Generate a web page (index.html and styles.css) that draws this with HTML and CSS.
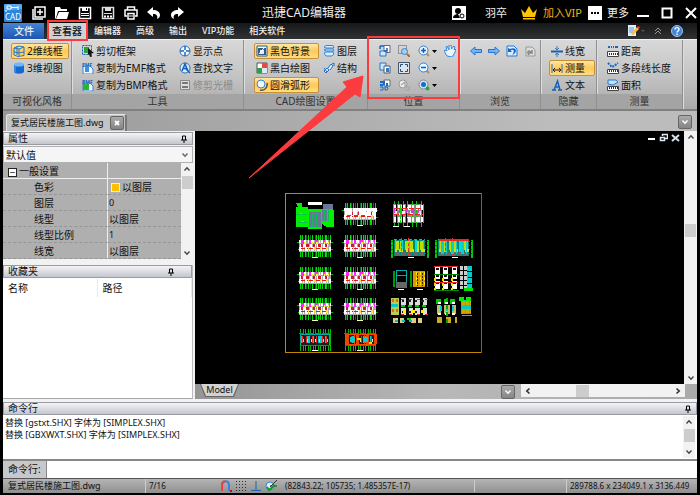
FILE: index.html
```html
<!DOCTYPE html>
<html lang="zh-CN">
<head>
<meta charset="utf-8">
<title>迅捷CAD编辑器</title>
<link rel="stylesheet" href="styles.css">
</head>
<body>
<svg class="defs" aria-hidden="true">
  <defs>
    <symbol id="i-down" viewBox="0 0 8 8"><path d="M1.500 2.500 4 5.200 6.500 2.500" fill="none" stroke="currentColor" stroke-width="1.400"/></symbol>
    <symbol id="i-up" viewBox="0 0 8 8"><path d="M1.500 5.500 4 2.800 6.500 5.500" fill="none" stroke="currentColor" stroke-width="1.400"/></symbol>
    <symbol id="i-left" viewBox="0 0 8 8"><path d="M5.500 1.500 2.800 4 5.500 6.500" fill="none" stroke="currentColor" stroke-width="1.600"/></symbol>
    <symbol id="i-right" viewBox="0 0 8 8"><path d="M2.500 1.500 5.200 4 2.500 6.500" fill="none" stroke="currentColor" stroke-width="1.600"/></symbol>
    <symbol id="i-pin" viewBox="0 0 8 8"><path d="M2.500 5V1h3v4M1 5h6M4 5v3" fill="none" stroke="#000"/><path d="M5 1h1v4H5z"/></symbol>

    <symbol id="plan" viewBox="0 0 36 24">
      <g fill="none">
        <path d="M3 12H34" stroke="#0d0" stroke-width="22" stroke-dasharray="1 1 1 2 2 1 1 1"/>
        <path d="M4 12H33" stroke="#052" stroke-width="22" stroke-dasharray="1 4 1 3" opacity=".8"/>
        <path d="M0 8.500H36M1 15.500H36" stroke="#0b0" stroke-dasharray="4 1 2 1"/>
        <path d="M2 11.500H34" stroke="#aaa" stroke-width="12"/>
        <path d="M2 7H34" stroke="#fff" stroke-width="3" stroke-dasharray="4 1 2 2 1 1"/>
        <path d="M4 8H33" stroke="#f2f" stroke-width="4" stroke-dasharray="3 5 2 4"/>
        <path d="M3 11H33" stroke="#fff" stroke-width="3" stroke-dasharray="2 1 3 1 1 2"/>
        <path d="M4 11H32" stroke="#d01830" stroke-width="3" stroke-dasharray="2 3 3 4"/>
        <path d="M7 9H32" stroke="#ff0" stroke-width="2" stroke-dasharray="2 6 1 3"/>
        <path d="M2 15H34" stroke="#fff" stroke-width="4" stroke-dasharray="3 1 1 1"/>
        <path d="M4 14.500H33" stroke="#e0181c" stroke-dasharray="4 2 6 3"/>
        <path d="M11 14H32" stroke="#fd4" stroke-width="3" stroke-dasharray="1 5 2 4"/>
        <path d="M15 23.500H21" stroke="#ffa"/>
      </g>
    </symbol>
    <symbol id="roof" viewBox="0 0 36 24">
      <g fill="none">
        <path d="M3 12H34" stroke="#0b0" stroke-width="22" stroke-dasharray="1 2 1 1"/>
        <path d="M3 12H33" stroke="#122" stroke-width="12"/>
        <path d="M3.500 6.500H32.500V17.500H3.500z" stroke="#0aa"/>
        <path d="M2 5.500H34M3 17.500H33" stroke="#e22" stroke-dasharray="5 2 8 1"/>
        <path d="M4 11H33" stroke="#0cc" stroke-width="7" stroke-dasharray="1 4 4 3"/>
        <path d="M5 11H32" stroke="#e22" stroke-width="7" stroke-dasharray="1 3 1 5"/>
        <path d="M6 12H31" stroke="#ddd" stroke-width="3" stroke-dasharray="1 3"/>
        <path d="M15 22.500H21" stroke="#fff"/>
      </g>
    </symbol>
    <symbol id="elev" viewBox="0 0 38 22">
      <g fill="none">
        <path d="M0 11.500H38" stroke="#0c0" stroke-width="18" stroke-dasharray="2 34"/>
        <path d="M0 4.500H37M0 8.500H37M0 12.500H37M0 16.500H37" stroke="#070" stroke-dasharray="2 1"/>
        <path d="M3 11H34" stroke="#087" stroke-width="16"/>
        <path d="M4 8H34" stroke="#bd0" stroke-width="9" stroke-dasharray="4 1 3 2"/>
        <path d="M4 9H34" stroke="#0dd" stroke-width="12" stroke-dasharray="1 5 2 6"/>
        <path d="M4 13H34" stroke="#dd0" stroke-width="3" stroke-dasharray="2 2 4 3"/>
        <path d="M4 17H34" stroke="#666" stroke-width="4" stroke-dasharray="5 1"/>
        <path d="M3 2.500H34" stroke="#0d0" stroke-dasharray="3 2"/>
        <path d="M17 1V20M10 1V19" stroke="#e33" stroke-dasharray="3 2"/>
        <path d="M17 20.500H23" stroke="#fff"/>
      </g>
    </symbol>
  </defs>
</svg>

<div class="app">
  <header class="titlebar">
    <svg class="logo" viewBox="0 0 18 18" aria-hidden="true"><rect width="18" height="18" rx="1" fill="#2b86dc"/><path d="M0 7 18 5V1L17 0H1L0 1z" fill="#58a8ef"/><path d="M3 2h4v3H3zM7 3.500h7M14 2v4M2 6v2" fill="none" stroke="#fff"/><text x="9" y="15.500" class="logo-text">CAD</text></svg>
    <nav class="quick" aria-label="快速访问">
      <button aria-label="新建"><svg viewBox="0 0 14 14"><path d="M3 1h10v10H3z" fill="none" stroke="#fff" stroke-width="1.500"/><path d="M1 3v10h10M8 3v6M5 6h6" fill="none" stroke="#fff" stroke-width="1.500"/></svg></button>
      <button aria-label="打开"><svg viewBox="0 0 14 14"><path d="M0 13V1h5l1 2h6v2H3L1 12z" fill="#fff"/><path d="M4 6h10l-2 7H1z" fill="#fff"/></svg></button>
      <button aria-label="保存"><svg viewBox="0 0 14 14"><path d="M1.500 1.500h11v11h-11z" fill="none" stroke="#fff" stroke-width="1.500"/><path d="M4 1h6v4H4zM3 7h8v1H3zM3 9h8v1H3z" fill="#fff"/><path d="M8 2h1v2H8z"/></svg></button>
      <button aria-label="另存为"><svg viewBox="0 0 14 14"><path d="M1.500 1.500h11v11h-11z" fill="none" stroke="#ddd" stroke-width="1.500"/><path d="M4 1h6v4H4zM3 7h8v1H3z" fill="#ddd"/><path d="M3 10.500h8" stroke="#fff" stroke-width="2" stroke-dasharray="2 1"/></svg></button>
      <button aria-label="打印"><svg viewBox="0 0 14 14"><path d="M3.500 4V1h7v3M3 10H1V4h12v6h-2M4 7.500h6V13H4z" fill="none" stroke="#fff" stroke-width="1.500"/><path d="M5 10h4" stroke="#fff"/></svg></button>
      <button aria-label="撤销"><svg viewBox="0 0 14 14"><path d="M6 1v3c4 0 7 2 7 5 0 2-1 3-3 4 1-3 0-5-4-5v3L0 6z" fill="#fff"/></svg></button>
      <button aria-label="重做"><svg viewBox="0 0 14 14"><path d="M8 1v3C4 4 1 6 1 9c0 2 1 3 3 4-1-3 0-5 4-5v3l6-5z" fill="#fff"/></svg></button>
    </nav>
    <h1>迅捷CAD编辑器</h1>
    <div class="account">
      <button class="user"><svg viewBox="0 0 14 14"><path d="M0 0h14v14H0z" fill="#fff"/><circle cx="6" cy="5" r="3"/><path d="M1 12c0-3 3-4 5-4l2 4z"/><circle cx="10" cy="10" r="2" fill="#fff" stroke="#000"/></svg><span>羽卒</span></button>
      <button class="vip"><svg viewBox="0 0 18 14"><path d="m1 3 4 4 4-7 4 7 4-4-2 8H3zM3 12h12v1.500H3z" fill="#ffc400"/></svg><span>加入VIP</span></button>
      <button class="more"><svg viewBox="0 0 14 14"><path d="M0 0h14v14H0z" fill="#fff"/><path d="M3 7h9" stroke="#000" stroke-width="2" stroke-dasharray="2 1"/></svg><span>更多</span></button>
    </div>
    <div class="window-buttons">
      <button aria-label="最小化"><svg viewBox="0 0 12 14"><path d="M0 9h12v2H0z" fill="#fff"/></svg></button>
      <button aria-label="最大化"><svg viewBox="0 0 12 14"><path d="M1.500 2.500h9v9h-9z" fill="none" stroke="#fff" stroke-width="2"/></svg></button>
      <button aria-label="关闭"><svg viewBox="0 0 12 14"><path d="m1 2 10 10M11 2 1 12" stroke="#fff" stroke-width="2"/></svg></button>
    </div>
  </header>

  <nav class="tabs" aria-label="功能区">
    <button class="file">文件</button>
    <button class="active">查看器</button>
    <button>编辑器</button>
    <button>高级</button>
    <button>输出</button>
    <button>VIP功能</button>
    <button>相关软件</button>
    <div class="tabs-end">
      <button aria-label="样式"><svg viewBox="0 0 18 12"><path d="M1 0h8v11H1z" fill="#def"/><path d="M2 3h5M2 5h5M2 7h4" stroke="#69c"/><path d="m4 9 6-7 2 2-6 6z" fill="#fb3"/><path d="m10 2 1-1 2 1-1 2z" fill="#e33"/><path d="M14 5h4l-2 2z" fill="#555"/></svg></button>
      <button aria-label="折叠功能区"><svg viewBox="0 0 8 12"><path d="m1 6 3-3 3 3M1 9l3-3 3 3" fill="none" stroke="#999"/></svg></button>
      <button aria-label="帮助"><svg viewBox="0 0 12 12"><circle cx="6" cy="6" r="5.500" fill="#4585d5" stroke="#9cc4f0"/><path d="M4 4.500C4 2 8 2 8 4.500 8 6 6 6 6 7.500M6 8.500V10" fill="none" stroke="#fff" stroke-width="1.400"/></svg></button>
    </div>
  </nav>

  <section class="ribbon">
    <div class="group g-style">
      <div class="tools">
        <button class="on"><svg viewBox="0 0 12 12"><path d="M1 3v7l4 1.500 6-1V2L6 1zM1 3l5 1 5-2M6 4v7M4 1v9M1 7l5 1 5-1" fill="none" stroke="#2476c8"/></svg>2维线框</button>
        <button><svg viewBox="0 0 12 12"><path d="M1 2.500v7c0 3 10 3 10 0v-7z" fill="#1769d2"/><ellipse cx="6" cy="2.500" rx="5" ry="2" fill="#70b8f8"/><path d="M2 4v6" stroke="#58a6f5"/></svg>3维视图</button>
      </div>
      <h2>可视化风格</h2>
    </div>
    <div class="group g-tools">
      <div class="tools">
        <button><svg viewBox="0 0 12 12"><path d="M.5.500h9v9h-9z" fill="none" stroke="#125bc0" stroke-dasharray="2 1"/><path d="M2 2h5v6H2z" fill="#27a338"/><path d="m6 3 6 5-3 .5 1 3-2 .5-1-3-1 1z" fill="#111"/></svg>剪切框架</button>
        <button><svg viewBox="0 0 12 12"><path d="M1 4h7l3 3v5H1z" fill="#eef6ff" stroke="#4181c8"/><path d="M3 5h4v5H3z" fill="#3c92e4"/><text x="0" y="4.500" class="tag">EMF</text></svg>复制为EMF格式</button>
        <button><svg viewBox="0 0 12 12"><path d="M1 4h7l3 3v5H1z" fill="#eef6ff" stroke="#4181c8"/><path d="M1 5h6v6H1z" fill="#25b53b"/><text x="0" y="4.500" class="tag">BMF</text></svg>复制为BMP格式</button>
        <button><svg viewBox="0 0 12 12"><circle cx="6" cy="6" r="5" fill="#f3f9ff" stroke="#346fae"/><path d="M6 1v4M6 7v4M1 6h4M7 6h4" stroke="#176bd0" stroke-width="1.500"/></svg>显示点</button>
        <button><svg viewBox="0 0 12 12"><circle cx="6" cy="6" r="5" fill="#dcecff" stroke="#346fae"/><path d="m3 9 3-7 3 7M4.500 6.500h3M7 7l4 4" fill="none" stroke="#155ebf" stroke-width="1.500"/></svg>查找文字</button>
        <button disabled><svg viewBox="0 0 12 12"><path d="M1.500 1.500h9v9h-9z" fill="#ddd" stroke="#888"/><path d="M3 4h6M3 8h6" stroke="#777" stroke-width="2"/></svg>修剪光栅</button>
      </div>
      <h2>工具</h2>
    </div>
    <div class="group g-draw">
      <div class="tools">
        <button class="on"><svg viewBox="0 0 12 12"><path d="M1 1h10v10H1z" fill="#fff" stroke="#265887"/><path d="M2 3h8v7H2z" fill="#305c87"/><path d="M4 5h4v4H4z" fill="#dfefff"/><path d="m3 9 5-6" stroke="#fff"/></svg>黑色背景</button>
        <button><svg viewBox="0 0 12 12"><path d="M1 1h10v10H1z" fill="#fff" stroke="#555"/><path d="M6 1h5v5H6z" fill="#e54949"/><path d="M1 6h5v5H1z" fill="#22a543"/><path d="M6 6h5v5H6z" fill="#dce9f5"/></svg>黑白绘图</button>
        <button class="on"><svg viewBox="0 0 12 12"><circle cx="5" cy="5" r="4" fill="#eef8ff" stroke="#3884d4"/><path d="M11 4c1 5-3 8-7 7" fill="none" stroke="#555" stroke-width="1.500"/></svg>圆滑弧形</button>
        <button><svg viewBox="0 0 12 12"><path d="M1 2 3 .5h7L11 3H3zM1 5l2-1h7l1 2H3zM1 8l2-1h7l1 2-2 2H3z" fill="#d9eeff" stroke="#3285d6"/></svg>图层</button>
        <button><svg viewBox="0 0 12 12"><path d="m1 9 3-3 2 2-3 3zM5 6l3-4 2 2-3 4M9 2l2-1v3M1 6l3 4" fill="#d8edff" stroke="#246fbd"/></svg>结构</button>
      </div>
      <h2>CAD绘图设置</h2>
    </div>
    <div class="group g-pos">
      <div class="tools">
        <button aria-label="上一视图"><svg viewBox="0 0 12 12"><path d="M5 .5h6v7H5z" fill="#fff" stroke="#667"/><path d="M1 6h6v5H1z" fill="#cfe8ff" stroke="#2574cc"/><path d="M1 1h4M1 1v3M8 3v3H5" stroke="#1763c5" stroke-width="1.500" fill="none"/></svg></button>
        <button aria-label="下一视图"><svg viewBox="0 0 12 12"><path d="M1 1h6v7H1z" fill="#cfe8ff" stroke="#2574cc"/><path d="M5 4h6v7H5z" fill="#fff" stroke="#556"/><path d="M7 6h3v4H7z" fill="#277bd1"/></svg></button>
        <button aria-label="三维视图"><svg viewBox="0 0 12 12"><path d="M5 1h6v6H5z" fill="#fff" stroke="#667"/><path d="M1 3h4v3M1 6h3M8 4v3" stroke="#176ac8" stroke-width="2" fill="none"/><path d="M1 8h3v3H1M6 8h2l1 1v1L8 11H6z" fill="none" stroke="#176ac8"/></svg></button>
        <button aria-label="窗口缩放"><svg viewBox="0 0 12 12"><path d="M.5.500h8v8h-8z" fill="none" stroke="#555" stroke-dasharray="1 1"/><circle cx="6.500" cy="6.500" r="3" fill="#9fd0fc" stroke="#3a84ca"/><path d="m9 9 3 3" stroke="#b26a20" stroke-width="2"/></svg></button>
        <button aria-label="全部显示"><svg viewBox="0 0 12 12"><path d="M.5.500h11v11H.500z" fill="#dfe5ea" stroke="#456"/><path d="M2.500 5V2.500H5M7 2.500h2.500V5M9.500 7v2.500H7M5 9.500H2.500V7" stroke="#234f80" fill="none"/></svg></button>
        <button aria-label="选择缩放" disabled><svg viewBox="0 0 12 12"><circle cx="5" cy="5" r="4" fill="#eee" stroke="#999"/><path d="m3 6 4-3v5h4v3H7" fill="none" stroke="#aaa" stroke-width="1.500"/></svg></button>
        <button aria-label="放大" class="drop"><svg viewBox="0 0 19 12"><path d="m8 8 3 3" stroke="#c58a40" stroke-width="2"/><circle cx="5.500" cy="5.500" r="4.500" fill="#eaf6ff" stroke="#2d80d8"/><path d="M3 5.500h5M5.500 3v5" stroke="#135fb9" stroke-width="1.500"/><path d="M14 5h5l-2.500 3z"/></svg></button>
        <button aria-label="缩小" class="drop"><svg viewBox="0 0 19 12"><path d="m8 8 3 3" stroke="#c58a40" stroke-width="2"/><circle cx="5.500" cy="5.500" r="4.500" fill="#eaf6ff" stroke="#2d80d8"/><path d="M3 5.500h5" stroke="#135fb9" stroke-width="1.500"/><path d="M14 5h5l-2.500 3z"/></svg></button>
        <button aria-label="视点" class="drop"><svg viewBox="0 0 19 12"><circle cx="5.500" cy="5.500" r="4.500" fill="#cde5fa" stroke="#888"/><circle cx="5.500" cy="5.500" r="2.500" fill="#176bcc"/><circle cx="9.500" cy="9.500" r="2" fill="#19af31"/><path d="M14 5h5l-2.500 3z"/></svg></button>
        <button aria-label="平移"><svg viewBox="0 0 12 12"><path d="M3 11 0 6l1-1 2 1-1-4 1-1 2 4V0h2l.5 4L10 1l1 1-1 3 1-1 1 1-2 4-2 3z" fill="#e8f5ff" stroke="#3789d8"/></svg></button>
      </div>
      <h2>位置</h2>
    </div>
    <div class="group g-nav">
      <div class="tools">
        <button aria-label="后退"><svg viewBox="0 0 12 12"><path d="M.5 6 5 2v2.500h6.500v3H5V10z" fill="#74b4f4" stroke="#2674d0"/></svg></button>
        <button aria-label="前进"><svg viewBox="0 0 12 12"><path d="M11.500 6 7 2v2.500H.500v3H7V10z" fill="#74b4f4" stroke="#2674d0"/></svg></button>
        <button aria-label="还原视图"><svg viewBox="0 0 12 12"><path d="M1 1h7l3 3v7H1z" fill="#dceeff" stroke="#277bd3"/><path d="M2 3v4h4L4.500 5.500C8 3 9 7 6 10c6-2 5-9-2-6z" fill="#1265cb"/></svg></button>
        <button aria-label="重复视图" disabled><svg viewBox="0 0 12 12"><path d="M2 2h6l3 3v6H2z" fill="#ddd" stroke="#999"/><path d="M8 5v3H5M8 8C4 4 3 7 5 10" fill="none" stroke="#888" stroke-width="1.500"/></svg></button>
      </div>
      <h2>浏览</h2>
    </div>
    <div class="group g-hide">
      <div class="tools">
        <button><svg viewBox="0 0 12 12"><path d="M0 6.500h12" stroke="#1c5fae" stroke-width="2"/><path d="M6 1v4M6 8v4M4 3l2 2 2-2M4 10l2-2 2 2" fill="none" stroke="#337bc5"/></svg>线宽</button>
        <button class="on"><svg viewBox="0 0 12 12"><path d="M1 2v9M11 2v9" stroke="#2671c3"/><path d="M2 8h8M4 6 2 8l2 2M8 6l2 2-2 2" stroke="#222" fill="none"/></svg>测量</button>
        <button><svg viewBox="0 0 12 12"><path d="M1 11h4M7 11h4M3 11 6.500 2 9 11M4 8h4" fill="none" stroke="#1761b9" stroke-width="1.500"/></svg>文本</button>
      </div>
      <h2>隐藏</h2>
    </div>
    <div class="group g-measure">
      <div class="tools">
        <button><svg viewBox="0 0 12 12"><path d="M.5 6.500h11v5H.500z" fill="#fff" stroke="#444"/><path d="M2 9h9" stroke="#333" stroke-width="2" stroke-dasharray="1 1"/><path d="M1 2h10" stroke="#1767c6" stroke-width="2" stroke-dasharray="2 1 1 1 1 1 3 1"/></svg>距离</button>
        <button><svg viewBox="0 0 12 12"><path d="M.5 7.500h11v4H.500z" fill="#fff" stroke="#444"/><path d="M2 9h9" stroke="#333" stroke-width="2" stroke-dasharray="1 1"/><path d="m1 1 4 4 2-1 4-3" fill="none" stroke="#1767c6" stroke-width="2" stroke-dasharray="2 1"/></svg>多段线长度</button>
        <button><svg viewBox="0 0 12 12"><path d="M.5 7.500h11v4H.500z" fill="#fff" stroke="#444"/><path d="M2 9h9" stroke="#333" stroke-width="2" stroke-dasharray="1 1"/><path d="M1 1h8l2 2-5 3-5-1z" fill="#c2e2ff" stroke="#2879d1"/></svg>面积</button>
      </div>
      <h2>测量</h2>
    </div>
  </section>

  <div class="doc-tabs">
    <div class="doc-tab"><span>复式居民楼施工图.dwg</span><button class="chip" aria-label="关闭文件"><svg viewBox="0 0 8 8"><path d="m2 2 4 4M6 2 2 6" stroke="#fff" stroke-width="1.800"/></svg></button></div>
    <button class="chip list" aria-label="文件列表"><svg><use href="#i-down"/></svg></button>
  </div>

  <main class="workspace">
    <aside class="side">
      <section class="props">
        <h3 class="bar">属性<svg><use href="#i-pin"/></svg></h3>
        <div class="picker"><select aria-label="对象"><option>默认值</option></select><svg><use href="#i-down"/></svg></div>
        <div class="prop-body">
          <table class="prop-table">
            <thead><tr><th><span class="minus">−</span>一般设置</th><td></td></tr></thead>
            <tbody>
              <tr><th>色彩</th><td><span class="swatch"></span>以图层</td></tr>
              <tr><th>图层</th><td class="num">0</td></tr>
              <tr><th>线型</th><td>以图层</td></tr>
              <tr><th>线型比例</th><td class="num">1</td></tr>
              <tr><th>线宽</th><td>以图层</td></tr>
            </tbody>
          </table>
          <div class="vscroll"><svg><use href="#i-up"/></svg><i class="thumb"></i><svg><use href="#i-down"/></svg></div>
        </div>
      </section>
      <section class="favs">
        <h3 class="bar">收藏夹<svg><use href="#i-pin"/></svg></h3>
        <table class="fav-table"><thead><tr><th>名称</th><th>路径</th></tr></thead></table>
      </section>
    </aside>

    <section class="viewer">
      <div class="stage">
        <svg class="drawing" role="img" aria-label="图纸">
          <rect x="90.500" y="62.500" width="196" height="159" fill="none" stroke="#c08a00"/>
          <path d="M286.500 62v160" stroke="#8a6200"/>
          <g>
            <path d="M101 72h6v4h6v2h24l2 2v16h-7l-5-3v5h-14v-2h-12V76h2z" fill="#00f000"/>
            <path d="M113 71h14v3h-14z" fill="#fff"/>
            <path d="M114 81h12v15h-12zM127 79h5v11h-5zM128 73h10v5h-10z" fill="#679"/>
            <path d="M117 82v14M121 82v14M129 78v12M133 78v12M101 83h10M103 91h9" stroke="#1b5" fill="none"/>
            <path d="M106 90h3M105 82h2" stroke="#cb0"/>
          </g>
          <use href="#plan" x="147" y="71" width="36" height="24"/>
          <path d="M150 79h32M150 83h31" stroke="#fff" stroke-width="4" stroke-dasharray="7 1 4 2"/>
          <path d="M152 84.500h18" stroke="#e22" stroke-dasharray="4 3"/>
          <use href="#plan" x="102" y="103" width="36" height="24"/>
          <use href="#plan" x="147" y="103" width="36" height="24"/>
          <use href="#plan" x="102" y="135" width="36" height="24"/>
          <use href="#plan" x="147" y="135" width="36" height="24"/>
          <use href="#plan" x="102" y="166" width="36" height="24"/>
          <use href="#plan" x="147" y="166" width="36" height="24"/>
          <use href="#roof" x="102" y="197" width="36" height="24"/>
          <use href="#roof" x="147" y="197" width="36" height="24"/>
          <path d="M151 208h31" stroke="#e40" stroke-width="10" stroke-dasharray="3 5 1 1"/>
          <path d="M155 208h22" stroke="#0cc" stroke-width="5" stroke-dasharray="5 8"/>
          <path d="M151 203.500h30M151 213.500h30" stroke="#f40" fill="none"/>
          <path d="M162 208h4M174 212h3" stroke="#fd0" stroke-width="2"/>
          <g fill="none">
            <path d="M199 83H229" stroke="#0c0" stroke-width="26" stroke-dasharray="1 3 1 4"/>
            <path d="M198 82H229" stroke="#888" stroke-width="19" stroke-dasharray="3 1 5 1"/>
            <path d="M199 76H228M199 88H228" stroke="#fff" stroke-width="5" stroke-dasharray="2 2 4 1"/>
            <path d="M199 82H228" stroke="#eee" stroke-width="4" stroke-dasharray="3 2 1 2"/>
            <path d="M199 79H228" stroke="#d3d" stroke-width="5" stroke-dasharray="1 4 3 4"/>
            <path d="M199 83.500H228M200 77.500H227" stroke="#e22" stroke-dasharray="5 2"/>
            <path d="M212 72V95M205 74V92M220 74V92" stroke="#0d0" stroke-dasharray="4 1"/>
            <path d="M198 95.500H204M209 95.500H215" stroke="#fff"/>
          </g>
          <use href="#elev" x="196" y="106" width="38" height="22"/>
          <use href="#elev" x="240" y="106" width="38" height="22"/>
          <path d="M244 108.500h30" stroke="#e22" stroke-width="2"/>
          <path d="M246 116h28" stroke="#1cc" stroke-width="13" stroke-dasharray="3 2 1 4"/>
          <g fill="none">
            <path d="M198 148H233" stroke="#090" stroke-width="16" stroke-dasharray="2 15"/>
            <path d="M201.500 157V139H211.500V157M202 144H211" stroke="#0aa"/>
            <path d="M201 154H212" stroke="#666" stroke-width="6"/>
            <path d="M218 148H230" stroke="#d90" stroke-width="16"/>
            <path d="M221 141V156M225 141V156M229 141V156" stroke="#fe0" stroke-dasharray="3 2"/>
            <path d="M222 142V155M227 142V155" stroke="#321" stroke-dasharray="2 1"/>
            <path d="M203 158.500H209M222 158.500H228" stroke="#fff"/>
          </g>
          <g fill="none">
            <path d="M242 135V160M250 135V160M259 135V160" stroke="#fff" stroke-width="5" stroke-dasharray="8 1 4 2"/>
            <path d="M242 137V160M250 137V160M259 137V160" stroke="#111" stroke-width="3" stroke-dasharray="2 5"/>
            <path d="M240 147V160M248 147V160M257 147V160" stroke="#ed0" stroke-width="2" stroke-dasharray="3 2"/>
            <path d="M239 135.500H263M239 151.500H263" stroke="#e22"/>
            <path d="M239 143.500H264M239 159.500H264" stroke="#080"/>
            <path d="M266 135V158M270 135V158" stroke="#ccc" stroke-width="3" stroke-dasharray="4 1"/>
            <path d="M274 135V158" stroke="#0cc" stroke-width="5" stroke-dasharray="5 1"/>
            <path d="M272 137V158" stroke="#e80" stroke-dasharray="3 1"/>
            <path d="M269 158H278" stroke="#0d0" stroke-width="3"/>
          </g>
          <g fill="none">
            <path d="M196 175H204" stroke="#bc5" stroke-width="17"/>
            <path d="M198 168V183M202 168V183" stroke="#e60" stroke-width="2" stroke-dasharray="3 2"/>
            <path d="M196 174H203" stroke="#0cc" stroke-width="3"/>
            <path d="M206 170H233M206 180H233" stroke="#ddd" stroke-width="7" stroke-dasharray="5 3 4 2"/>
            <path d="M207 170H232M207 181H232" stroke="#222" stroke-width="2" stroke-dasharray="2 4 3 4"/>
            <path d="M206 168.500H233M206 183.500H233" stroke="#e22" stroke-dasharray="3 5"/>
            <path d="M206 174.500H234M198 187.500H216" stroke="#0c0" stroke-width="2" stroke-dasharray="4 3"/>
            <path d="M208 180H232" stroke="#fe0" stroke-width="3" stroke-dasharray="3 6"/>
            <path d="M198 189H232" stroke="#dc8" stroke-width="5" stroke-dasharray="5 2 4 7"/>
            <path d="M200 190H218" stroke="#0bc" stroke-width="2" stroke-dasharray="3 4"/>
          </g>
          <g fill="none">
            <path d="M241 170H263" stroke="#0c0" stroke-width="5" stroke-dasharray="5 3 2 4"/>
            <path d="M242 178H264" stroke="#cb6" stroke-width="9" stroke-dasharray="4 3 6 2"/>
            <path d="M245 177H262" stroke="#0cc" stroke-width="5" stroke-dasharray="2 4"/>
            <path d="M242 189H262" stroke="#ca2" stroke-width="6" stroke-dasharray="5 4"/>
            <path d="M243 172H262M243 183H262" stroke="#fff" stroke-width="2" stroke-dasharray="3 4"/>
            <path d="M252 167V192" stroke="#0a0" stroke-width="2" stroke-dasharray="4 3"/>
            <path d="M266 176H276" stroke="#0cc" stroke-width="14"/>
            <path d="M267 172H276M267 180H276" stroke="#ca0" stroke-width="4" stroke-dasharray="3 1"/>
            <path d="M264 168H278" stroke="#0e0" stroke-width="4" stroke-dasharray="5 2"/>
            <path d="M267 184.500H277" stroke="#e70"/>
          </g>
        </svg>
        <div class="mdi">
          <button aria-label="最小化图纸"><svg viewBox="0 0 9 9"><path d="M1 5h7v2H1z" fill="#fff"/></svg></button>
          <button aria-label="还原图纸"><svg viewBox="0 0 9 9"><path d="M3.500 3V1.500h5v4H6M1.500 4.500h4v3h-4z" fill="none" stroke="#dde8f0" stroke-width="1.500"/></svg></button>
          <button aria-label="关闭图纸"><svg viewBox="0 0 9 9"><path d="m1 2 7 6M8 2 1 8" stroke="#d6e3ee" stroke-width="2"/></svg></button>
        </div>
      </div>
      <div class="vscroll tall"><svg><use href="#i-up"/></svg><i class="thumb"></i><svg><use href="#i-down"/></svg></div>
      <div class="sheet-bar">
        <button class="sheet"><span>Model</span></button>
        <button class="chip" aria-label="布局列表"><svg><use href="#i-down"/></svg></button>
        <div class="hscroll"><svg><use href="#i-left"/></svg><i class="thumb"></i><svg><use href="#i-right"/></svg></div>
      </div>
    </section>
  </main>

  <section class="command">
    <h3 class="bar">命令行<svg><use href="#i-pin"/></svg></h3>
    <div class="log">
      <div class="log-text"><p>替换 [gstxt.SHX] 字体为 [SIMPLEX.SHX]</p><p>替换 [GBXWXT.SHX] 字体为 [SIMPLEX.SHX]</p></div>
      <div class="vscroll"><svg><use href="#i-up"/></svg><i class="thumb"></i><svg><use href="#i-down"/></svg></div>
    </div>
    <div class="prompt"><label for="cmd">命令行:</label><input id="cmd" type="text"></div>
  </section>

  <footer class="status">
    <span class="s-file">复式居民楼施工图.dwg</span>
    <span class="s-page">7/16</span>
    <span class="s-tools">
      <button aria-label="捕捉"><svg viewBox="0 0 12 12"><path d="M2 11V5c0-5 7-5 7 0v6" fill="none" stroke="#3c82d8" stroke-width="2"/><path d="M2 11V5c0-2 1-3.500 3-3.500" fill="none" stroke="#e8443c" stroke-width="2"/><path d="M10 10h2v2h-2z" fill="#d00"/></svg></button>
      <button aria-label="栅格"><svg viewBox="0 0 12 12"><path d="M1 1.500h11M1 4.500h11M1 7.500h11M1 10.500h11" stroke="#333" stroke-dasharray="1 2"/></svg></button>
      <button aria-label="正交"><svg viewBox="0 0 12 12"><path d="M1 10.500h10M6 1v9" stroke="#1769a8"/></svg></button>
      <button aria-label="对象捕捉"><svg viewBox="0 0 12 12"><circle cx="5" cy="6" r="4" fill="#dceeff" stroke="#388ac8"/><path d="m5 7 7-7M5 6h7" stroke="#333"/><path d="m2 7 2 3 6-5" fill="none" stroke="#129c21" stroke-width="2"/></svg></button>
    </span>
    <span class="s-coord">(82843.22; 105735; 1.485357E-17)</span>
    <span class="s-gap"></span>
    <span class="s-size">289788.6 x 234049.1 x 3136.449</span>
  </footer>
</div>

<svg class="callout" aria-hidden="true">
  <g fill="none" stroke="#fb3b3e" stroke-width="2"><path d="M48 21h39v19H48zM368 37h91v61h-91z"/></g>
  <path d="M249 178 347 87 343 82 363 76 360 97 355 94z" fill="#fb3b3e" stroke="#fb3b3e" stroke-linejoin="round"/>
</svg>
</body>
</html>
```

FILE: styles.css
```css
* { box-sizing: border-box; }
body {
  margin: 0;
  background: #000;
  color: #111;
  font: 10px/14px "Noto Sans", "Noto Sans CJK SC", sans-serif;
}
h1, h2, h3, p { margin: 0; font-weight: 400; }
button { border: 0; margin: 0; padding: 0; background: none; color: inherit; font: inherit; white-space: nowrap; }
svg { display: block; flex: none; }
.defs { position: absolute; width: 0; height: 0; }
.app { display: flex; flex-direction: column; min-height: 100vh; padding: 0 3px 2px 3px; }

.titlebar { display: flex; align-items: center; height: 23px; padding-top: 2px; color: #eee; }
.logo { width: 18px; height: 18px; margin-left: 1px; }
.logo-text { font: 8px "Noto Sans", sans-serif; fill: #fff; text-anchor: middle; }
.quick { display: flex; gap: 9px; margin-left: 10px; }
.quick svg { width: 14px; height: 14px; }
.titlebar h1 { flex: 1; padding-right: 28px; text-align: center; font-size: 12px; line-height: 20px; }
.account { display: flex; align-items: center; font-size: 11px; }
.account button { display: flex; align-items: center; gap: 5px; }
.account svg { height: 14px; width: 14px; }
.account .user { gap: 19px; margin-right: 13px; }
.account .vip { color: #e8b416; margin-right: 6px; }
.account .vip svg { width: 18px; }
.window-buttons { display: flex; gap: 12px; margin-left: 8px; }
.window-buttons svg { width: 12px; height: 14px; }

.tabs { display: flex; height: 16px; background: linear-gradient(#151719, #303234); color: #eee; }
.tabs button { padding: 0 7px 0 8px; font-size: 9px; font-weight: 500; }
.tabs .file { width: 41px; font-size: 10px; background: linear-gradient(#4584d6, #1c56b0); }
.tabs .active { width: 38px; margin: 0 0 0 4px; padding: 0; background: #d2d2d2; color: #111; font-size: 10px; }
.tabs-end { display: flex; align-items: center; gap: 9px; margin-left: auto; padding-right: 14px; }
.tabs .tabs-end button { padding: 0; }
.tabs-end svg { height: 12px; width: 12px; }
.tabs-end button:first-child svg { width: 18px; }
.tabs-end button:nth-child(2) svg { width: 8px; }

.ribbon { display: flex; height: 72px; background: linear-gradient(#d8d8d8, #c7c7c7 45%, #a9a9a9); border-top: 1px solid #f0f0f0; border-bottom: 2px solid #808080; }
.group { display: flex; flex-direction: column; padding-top: 3px; border-right: 1px solid #8f8f8f; box-shadow: 1px 0 #dedede; }
.tools { display: grid; grid-auto-flow: column; grid-template-rows: repeat(3, 16px); row-gap: 1px; height: 50px; justify-content: start; }
.tools button { display: flex; align-items: center; gap: 2px; padding: 0 1px; border: 1px solid transparent; border-radius: 2px; }
.tools svg { width: 12px; height: 12px; }
.tools .drop svg { width: 19px; }
.tools button.on { background: linear-gradient(#ffe7a4, #ffc95a 50%, #ffdd80); border-color: #c69136; }
.tools button:disabled { color: #8a8a8a; }
.group h2 { margin-top: 1px; height: 15px; text-align: center; font-size: 10px; line-height: 14px; color: #333; background: #a4a4a4; }
.tag { font: 700 5px "Noto Sans", sans-serif; fill: #0f66c5; }
.g-style { width: 69px; }
.g-style .tools { padding-left: 8px; grid-template-columns: 58px; }
.g-tools { width: 172px; }
.g-tools .tools { padding-left: 8px; grid-template-columns: 97px auto; }
.g-draw { width: 124px; }
.g-draw .tools { padding-left: 10px; grid-template-columns: 65px auto; column-gap: 2px; }
.g-pos { width: 92px; }
.g-pos .tools { padding-left: 9px; grid-template-columns: 19px 20px 26px 16px; }
.g-nav { width: 81px; }
.g-nav .tools { padding-left: 8px; grid-template-columns: repeat(4, 18px); grid-template-rows: 16px; grid-auto-flow: row; }
.g-hide { width: 56px; }
.g-hide .tools { padding-left: 8px; grid-template-columns: 46px; }
.g-measure { width: 86px; }
.g-measure .tools { padding-left: 8px; }

.doc-tabs { display: flex; align-items: flex-end; height: 20px; padding: 0 5px 0 3px; background: linear-gradient(90deg, #999, #bcbcbc 80%); }
.doc-tab { display: flex; align-items: center; gap: 6px; height: 17px; padding: 0 1px 0 4px; background: #c3c3c3; border: 1px solid #e5e5e5; border-right: 2px solid #777; border-bottom: 0; border-radius: 3px 3px 0 0; font-size: 9px; }
.chip { display: grid; place-items: center; width: 14px; height: 14px; border: 1px solid #666; border-radius: 2px; background: linear-gradient(#aaa, #858585); color: #fff; }
.chip svg { width: 8px; height: 8px; }
.chip.list { margin: 0 0 2px auto; }

.workspace { display: flex; flex: 1; background: #f2f2f2; }
.side { display: flex; flex-direction: column; gap: 6px; width: 192px; padding: 1px 2px 0 0; }
.bar { display: flex; align-items: center; justify-content: space-between; height: 13px; padding: 0 4px; border: 1px solid #989ba2; background: linear-gradient(#f4f4f6, #c4c6ce); font-size: 10px; line-height: 11px; }
.bar svg { width: 8px; height: 8px; }
.picker { position: relative; margin-top: 1px; border: 1px solid #b0b0b0; background: #f5f5f5; }
.picker select { display: block; width: 100%; height: 15px; padding: 0 2px; border: 0; background: none; appearance: none; font: inherit; color: #111; }
.picker svg { position: absolute; right: 3px; top: 4px; width: 8px; height: 8px; color: #666; }
.prop-body { display: flex; }
.prop-table { flex: 1; border-collapse: separate; border-spacing: 0; table-layout: fixed; width: 100px; background: #afafaf; }
.prop-table th, .prop-table td { height: 16px; padding: 0 0 0 31px; border-bottom: 1px dashed #969696; line-height: 14px; font-weight: 400; text-align: left; white-space: nowrap; }
.prop-table th { width: 105px; border-right: 1px solid #eee; }
.prop-table td { padding-left: 1px; }
.prop-table td.num { font-size: 9px; }
.prop-table thead th { padding-left: 5px; }
.prop-table thead th, .prop-table thead td { border-bottom: 1px solid #eee; }
.minus { display: inline-block; width: 9px; height: 9px; margin-right: 2px; border: 1px solid #222; background: #fff; line-height: 7px; text-align: center; vertical-align: -1px; }
.swatch { display: inline-block; width: 9px; height: 9px; margin: 0 2px; border: 1px solid #eee; background: #ffbf00; vertical-align: -1px; }
.vscroll { display: flex; flex-direction: column; align-items: center; width: 12px; padding: 2px 0; background: #f2f2f2; color: #444; }
.vscroll svg, .hscroll svg { width: 8px; height: 8px; }
.vscroll svg:last-child { margin-top: auto; }
.vscroll .thumb { width: 11px; height: 13px; margin-top: 3px; background: #cdcdcd; }
.favs { display: flex; flex-direction: column; flex: 1; border-bottom: 1px solid #aaa; background: #fff; margin-bottom: 3px; border-right: 1px solid #bbb; }
.favs .bar { padding-right: 16px; }
.fav-table { margin-top: 1px; width: 100%; border-spacing: 0; }
.fav-table th { width: 50%; height: 18px; padding: 0 5px; border-right: 1px solid #e8e8e8; font-weight: 400; text-align: left; }

.viewer { display: grid; flex: 1; grid-template: 1fr 15px / 1fr 13px; margin-bottom: 3px; }
.stage { position: relative; background: #000; }
.drawing { width: 100%; height: 100%; shape-rendering: crispEdges; }
.mdi { position: absolute; top: 2px; right: 4px; display: flex; gap: 3px; }
.mdi svg { width: 9px; height: 9px; }
.tall { width: 13px; }
.tall .thumb { width: 11px; margin-top: 83px; }
.sheet-bar { grid-column: 1 / -1; display: flex; align-items: flex-start; padding: 0 12px 0 5px; background: linear-gradient(90deg, #959595, #b8b8b8 50%, #aaa); }
.sheet { width: 39px; height: 13px; background: #666; clip-path: polygon(0 0, 100% 0, 34px 100%, 5px 100%); font-size: 9px; line-height: 12px; }
.sheet span { display: block; margin: 0 1px 1px; background: #d2d2d2; clip-path: polygon(0 0, 100% 0, 32px 100%, 5px 100%); }
.sheet-bar .chip { margin: 1px 6px 0 auto; }
.hscroll { display: flex; align-items: center; width: 164px; height: 13px; padding: 0 3px; background: #f2f2f2; color: #333; }
.hscroll .thumb { width: 13px; height: 12px; margin-left: 44px; background: #cdcdcd; }
.hscroll svg:last-child { margin-left: auto; }

.command { background: #fff; }
.log { display: flex; justify-content: space-between; height: 46px; padding: 1px 2px 1px 2px; border-bottom: 2px solid #888; }
.log-text { padding-top: 1px; font-size: 9px; line-height: 12px; }
.prompt { display: flex; height: 17px; }
.prompt label { width: 44px; padding-left: 5px; border-right: 1px solid #888; background: #c6c8cc; line-height: 16px; }
.prompt input { flex: 1; min-width: 0; border: 0; padding: 0 4px; background: #fff; font: inherit; outline: 0; }

.status { display: flex; align-items: center; height: 15px; border-top: 1px solid #555; background: linear-gradient(#b5b5b5, #8f8f8f); font-size: 8px; line-height: 14px; }
.s-file { width: 142px; padding-left: 5px; font-size: 9px; }
.s-page { width: 73px; padding-left: 3px; border-left: 1px solid #ccc; }
.s-tools { display: flex; gap: 3px; width: 66px; padding-left: 2px; }
.s-tools svg { width: 12px; height: 12px; }
.s-coord { flex: 1; padding-left: 1px; }
.s-gap { width: 92px; height: 12px; border-left: 1px solid #ccc; }
.s-size { width: 131px; padding-left: 3px; border-left: 1px solid #ccc; }

.callout { position: absolute; top: 0; left: 0; width: 470px; height: 190px; pointer-events: none; }
```
